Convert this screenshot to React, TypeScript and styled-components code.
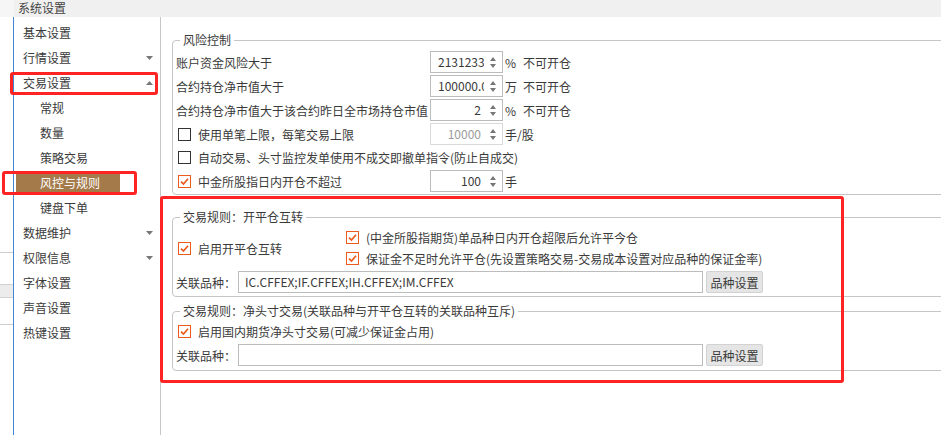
import React from "react";
import styled, { createGlobalStyle } from "styled-components";

const GlobalStyle = createGlobalStyle`
  html, body {
    margin: 0;
    padding: 0;
    background: #fff;
  }
  body {
    font-family: "Noto Sans CJK SC", "Noto Sans", sans-serif;
    font-size: 12px;
    color: #3a3a3a;
  }
  * {
    box-sizing: border-box;
  }
`;

const menu = [
  { label: "基本设置" },
  { label: "行情设置", arrow: "down" },
  { label: "交易设置", arrow: "up" },
  { label: "常规", sub: true },
  { label: "数量", sub: true },
  { label: "策略交易", sub: true },
  { label: "风控与规则", sub: true, active: true },
  { label: "键盘下单", sub: true },
  { label: "数据维护", arrow: "down" },
  { label: "权限信息", arrow: "down" },
  { label: "字体设置" },
  { label: "声音设置" },
  { label: "热键设置" },
];

const Arrow = ({ dir }: { dir: string }) => (
  <svg width="7" height="4" viewBox="0 0 7 4">
    {dir === "down" ? (
      <path d="M0 0 H7 L3.5 4 Z" fill="#777" />
    ) : (
      <path d="M0 4 H7 L3.5 0 Z" fill="#777" />
    )}
  </svg>
);

const Check = ({ checked }: { checked?: boolean }) => (
  <CheckBox $checked={checked}>
    {checked && (
      <svg width="11" height="11" viewBox="0 0 11 11">
        <path d="M2 5.6 L4.5 8 L9 2.8" fill="none" stroke="#ec5a1c" strokeWidth="1.7" />
      </svg>
    )}
  </CheckBox>
);

const SpinBox = ({ value, disabled }: { value: string; disabled?: boolean }) => (
  <Spin $disabled={disabled}>
    <SpinValue>{value}</SpinValue>
    <SpinArrows>
      <svg width="6" height="11" viewBox="0 0 6 11">
        <path d="M0 4 H6 L3 0 Z" fill="#777" />
        <path d="M0 7 H6 L3 11 Z" fill="#777" />
      </svg>
    </SpinArrows>
  </Spin>
);

const LinkRow = ({ value }: { value: string }) => (
  <LinkLine>
    <LinkLabel>关联品种：</LinkLabel>
    <TextField>{value}</TextField>
    <SmallButton>品种设置</SmallButton>
  </LinkLine>
);

export default function App() {
  return (
    <Screen>
      <GlobalStyle />
      <BackStrip>
        <StripTop />
        <StripBody>
          <StripLine $top={235} />
          <StripBand />
          <StripLine $top={26} />
        </StripBody>
      </BackStrip>

      <Window>
        <TitleBar>系统设置</TitleBar>
        <Body>
          <Sidebar>
            {menu.map((m) =>
              m.sub ? (
                <SubItem key={m.label} $active={m.active}>
                  {m.label}
                </SubItem>
              ) : (
                <MenuItem key={m.label}>
                  <span>{m.label}</span>
                  {m.arrow && <Arrow dir={m.arrow} />}
                </MenuItem>
              )
            )}
          </Sidebar>

          <Content>
            <Group>
              <Legend>风险控制</Legend>
              <RiskGrid>
                <span>账户资金风险大于</span>
                <SpinBox value="2131233" />
                <UnitCell>
                  <Unit>%</Unit>不可开仓
                </UnitCell>

                <span>合约持仓净市值大于</span>
                <SpinBox value="100000.0" />
                <UnitCell>
                  <Unit>万</Unit>不可开仓
                </UnitCell>

                <span>合约持仓净市值大于该合约昨日全市场持仓市值</span>
                <SpinBox value="2" />
                <UnitCell>
                  <Unit>%</Unit>不可开仓
                </UnitCell>

                <CheckRow>
                  <Check />
                  使用单笔上限，每笔交易上限
                </CheckRow>
                <SpinBox value="10000" disabled />
                <UnitCell>手/股</UnitCell>

                <CheckRow $wide>
                  <Check />
                  自动交易、头寸监控发单使用不成交即撤单指令(防止自成交)
                </CheckRow>

                <CheckRow>
                  <Check checked />
                  中金所股指日内开仓不超过
                </CheckRow>
                <SpinBox value="100" />
                <UnitCell>手</UnitCell>
              </RiskGrid>
            </Group>

            <Group $gap={14} $bottom={3}>
              <Legend>交易规则：开平仓互转</Legend>
              <SwapTop>
                <SwapLeft>
                  <CheckRow>
                    <Check checked />
                    启用开平仓互转
                  </CheckRow>
                </SwapLeft>
                <div>
                  <CheckRow $flush>
                    <Check checked />
                    (中金所股指期货)单品种日内开仓超限后允许平今仓
                  </CheckRow>
                  <CheckRow $flush>
                    <Check checked />
                    保证金不足时允许平仓(先设置策略交易-交易成本设置对应品种的保证金率)
                  </CheckRow>
                </div>
              </SwapTop>
              <LinkRow value="IC.CFFEX;IF.CFFEX;IH.CFFEX;IM.CFFEX" />
            </Group>

            <Group $gap={6} $bottom={4}>
              <Legend>交易规则：净头寸交易(关联品种与开平仓互转的关联品种互斥)</Legend>
              <CheckRow>
                <Check checked />
                启用国内期货净头寸交易(可减少保证金占用)
              </CheckRow>
              <LinkRow value="" />
            </Group>
          </Content>
        </Body>
      </Window>

      <Mark style={{ left: 10, top: 72, width: 148, height: 23 }} />
      <Mark style={{ left: 2, top: 171, width: 135, height: 24 }} />
      <Mark style={{ left: 160, top: 196, width: 684, height: 187 }} />
    </Screen>
  );
}

const Screen = styled.div`
  position: relative;
  width: 941px;
  height: 435px;
  display: flex;
  overflow: hidden;
  background: #fff;
`;

const BackStrip = styled.div`
  width: 14px;
  flex: none;
  display: flex;
  flex-direction: column;
`;

const StripTop = styled.div`
  height: 17px;
  background: #f6f6f6;
`;

const StripBody = styled.div`
  flex: 1;
  border-right: 1px solid #3f86d6;
`;

const StripLine = styled.div<{ $top: number }>`
  margin-top: ${(p) => p.$top}px;
  border-top: 1px solid #cfcfcf;
`;

const StripBand = styled.div`
  margin-top: 31px;
  height: 14px;
  background: #ececec;
  border-top: 1px solid #d2d2d2;
  border-bottom: 1px solid #d2d2d2;
`;

const Window = styled.div`
  flex: 1;
  display: flex;
  flex-direction: column;
  min-width: 0;
`;

const TitleBar = styled.div`
  height: 17px;
  line-height: 16px;
  padding-left: 4px;
  background: #f0f0f0;
  color: #444;
`;

const Body = styled.div`
  flex: 1;
  display: flex;
  min-height: 0;
`;

const Sidebar = styled.div`
  width: 147px;
  flex: none;
  padding-top: 3px;
  border-right: 1px solid #c6c6c6;
`;

const MenuItem = styled.div`
  height: 25px;
  display: flex;
  align-items: center;
  justify-content: space-between;
  padding: 0 7px 0 9px;
`;

const SubItem = styled.div<{ $active?: boolean }>`
  display: flex;
  align-items: center;
  height: ${(p) => (p.$active ? "21px" : "25px")};
  margin: ${(p) => (p.$active ? "2px 0 2px 2px" : "0")};
  width: ${(p) => (p.$active ? "104px" : "auto")};
  padding-left: ${(p) => (p.$active ? "24px" : "26px")};
  background: ${(p) => (p.$active ? "#a47a4b" : "transparent")};
  color: ${(p) => (p.$active ? "#fff" : "inherit")};
`;

const Content = styled.div`
  flex: 1;
  min-width: 0;
  overflow: hidden;
  padding: 15px 0 0 11px;
`;

const Group = styled.fieldset<{ $gap?: number; $bottom?: number }>`
  margin: ${(p) => p.$gap ?? 0}px -40px 0 0;
  padding: 2px 0 ${(p) => p.$bottom ?? 2}px 3px;
  border: 1px solid #c6c6c6;
  border-radius: 4px;
  min-width: 0;
`;

const Legend = styled.legend`
  margin-left: 4px;
  padding: 0 3px;
  line-height: 16px;
  font-size: 12px;
`;

const RiskGrid = styled.div`
  display: grid;
  grid-template-columns: 254px 73px 1fr;
  grid-template-rows: 22px 22px 22px 22px 21px 22px;
  row-gap: 2px;
  align-items: center;
  margin-top: 1px;
`;

const UnitCell = styled.div`
  display: flex;
  align-items: center;
  padding-left: 2px;
`;

const Unit = styled.span`
  min-width: 18px;
`;

const Spin = styled.div<{ $disabled?: boolean }>`
  display: flex;
  height: 22px;
  border: 1px solid ${(p) => (p.$disabled ? "#dadada" : "#bcbcbc")};
  color: ${(p) => (p.$disabled ? "#9a9a9a" : "inherit")};
  background: #fff;
`;

const SpinValue = styled.div`
  flex: 1;
  min-width: 0;
  overflow: hidden;
  white-space: nowrap;
  text-align: right;
  line-height: 20px;
  padding: 0 3px 0 7px;
`;

const SpinArrows = styled.div`
  width: 18px;
  display: flex;
  align-items: center;
  justify-content: center;
`;

const CheckRow = styled.div<{ $wide?: boolean; $flush?: boolean }>`
  display: flex;
  align-items: center;
  gap: 7px;
  height: 21px;
  padding-left: ${(p) => (p.$flush ? "0" : "2px")};
  white-space: nowrap;
  grid-column: ${(p) => (p.$wide ? "1 / -1" : "auto")};
`;

const CheckBox = styled.span<{ $checked?: boolean }>`
  width: 13px;
  height: 13px;
  flex: none;
  display: flex;
  align-items: center;
  justify-content: center;
  border: 1px solid ${(p) => (p.$checked ? "#ec5a1c" : "#333")};
  background: #fff;
`;

const SwapTop = styled.div`
  display: flex;
`;

const SwapLeft = styled.div`
  width: 170px;
  display: flex;
  align-items: center;
`;

const LinkLine = styled.div`
  display: flex;
  align-items: center;
  height: 22px;
  margin-top: 2px;
`;

const LinkLabel = styled.span`
  width: 62px;
`;

const TextField = styled.div`
  width: 465px;
  height: 22px;
  line-height: 20px;
  padding-left: 6px;
  border: 1px solid #bcbcbc;
  background: #fff;
  white-space: nowrap;
`;

const SmallButton = styled.button`
  margin-left: 3px;
  width: 57px;
  height: 22px;
  padding: 0;
  font-family: inherit;
  font-size: 12px;
  color: inherit;
  background: #e5e5e5;
  border: 1px solid #d2d2d2;
  border-radius: 2px;
`;

const Mark = styled.div`
  position: absolute;
  border: 3px solid #ff2424;
  border-radius: 3px;
  pointer-events: none;
`;
